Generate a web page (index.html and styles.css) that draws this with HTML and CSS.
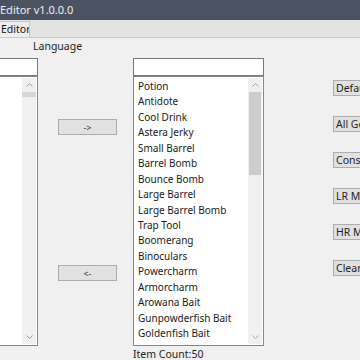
FILE: index.html
```html
<!DOCTYPE html>
<html>
<head>
<meta charset="utf-8">
<link rel="stylesheet" href="styles.css">
</head>
<body>
<div class="window">
  <div class="titlebar">Editor v1.0.0.0</div>
  <div class="tabstrip">
    <div class="tab">Editor</div>
  </div>
  <div class="panel">
    <div class="lang">Language</div>
    <div class="main">
      <div class="col col-left">
        <div class="textbox"></div>
        <div class="listbox">
          <div class="scrollbar">
            <div class="arrow up"><svg width="7" height="4" viewBox="0 0 7 4"><path d="M0.5 3.5 L3.5 0.5 L6.5 3.5" fill="none" stroke="#a0a0a0" stroke-width="1"/></svg></div>
            <div class="thumb thumb-left"></div>
            <div class="track"></div>
            <div class="arrow down"><svg width="7" height="4" viewBox="0 0 7 4"><path d="M0.5 0.5 L3.5 3.5 L6.5 0.5" fill="none" stroke="#a0a0a0" stroke-width="1"/></svg></div>
          </div>
        </div>
      </div>
      <div class="col col-mid">
        <button class="btn btn-add">-&gt;</button>
        <button class="btn btn-remove">&lt;-</button>
      </div>
      <div class="col col-list">
        <div class="textbox"></div>
        <div class="listbox">
          <ul class="items">
            <li>Potion</li>
            <li>Antidote</li>
            <li>Cool Drink</li>
            <li>Astera Jerky</li>
            <li>Small Barrel</li>
            <li>Barrel Bomb</li>
            <li>Bounce Bomb</li>
            <li>Large Barrel</li>
            <li>Large Barrel Bomb</li>
            <li>Trap Tool</li>
            <li>Boomerang</li>
            <li>Binoculars</li>
            <li>Powercharm</li>
            <li>Armorcharm</li>
            <li>Arowana Bait</li>
            <li>Gunpowderfish Bait</li>
            <li>Goldenfish Bait</li>
          </ul>
          <div class="scrollbar">
            <div class="arrow up"><svg width="7" height="4" viewBox="0 0 7 4"><path d="M0.5 3.5 L3.5 0.5 L6.5 3.5" fill="none" stroke="#a0a0a0" stroke-width="1"/></svg></div>
            <div class="thumb thumb-right"></div>
            <div class="track"></div>
            <div class="arrow down"><svg width="7" height="4" viewBox="0 0 7 4"><path d="M0.5 0.5 L3.5 3.5 L6.5 0.5" fill="none" stroke="#a0a0a0" stroke-width="1"/></svg></div>
          </div>
        </div>
        <div class="count">Item Count:50</div>
      </div>
      <div class="col col-right">
        <button class="sbtn">Default</button>
        <button class="sbtn">All Gear</button>
        <button class="sbtn">Consumables</button>
        <button class="sbtn">LR Materials</button>
        <button class="sbtn">HR Materials</button>
        <button class="sbtn">Clear</button>
      </div>
    </div>
  </div>
</div>
</body>
</html>
```
FILE: styles.css
```css
* { box-sizing: border-box; }
html, body {
  margin: 0;
  padding: 0;
  width: 360px;
  height: 360px;
  overflow: hidden;
  background: #f0f0f0;
  font-family: "Noto Sans", "Open Sans", sans-serif;
  font-size: 10px;
  color: #1e1e1e;
}
.window {
  width: 360px;
  height: 360px;
  display: flex;
  flex-direction: column;
  overflow: hidden;
}
.titlebar {
  height: 20px;
  background: #4b5362;
  color: #eceef0;
  font-size: 11px;
  line-height: 20px;
  padding-left: 0;
  white-space: nowrap;
}
.tabstrip {
  height: 18px;
  background: #e3e3e3;
  border-bottom: 1px solid #c9c9c9;
  display: flex;
  align-items: flex-end;
  padding-top: 2px;
}
.tab {
  height: 16px;
  width: 30px;
  background: #efefef;
  border: 1px solid #c6c6c6;
  border-left: none;
  border-bottom: none;
  line-height: 15px;
  padding-left: 1px;
  font-size: 10.5px;
  color: #111;
  white-space: nowrap;
  overflow: hidden;
}
.panel {
  flex: 1;
  background: #f0f0f0;
  position: relative;
}
.lang {
  margin-left: 33px;
  height: 20px;
  line-height: 15px;
  padding-top: 1px;
  font-size: 10.5px;
  color: #1e1e1e;
}
.main {
  display: flex;
  align-items: flex-start;
}
.col { display: flex; flex-direction: column; flex: none; }
.col-left { width: 38px; }
.col-mid { width: 59px; margin-left: 20px; }
.col-list { width: 131px; margin-left: 16px; }
.col-right { margin-left: 69px; width: 60px; padding-top: 22px; gap: 20px; }

.textbox {
  height: 18px;
  background: #fff;
  border: 1px solid #7a7a7a;
}
.col-left .textbox { border-left: none; }
.listbox {
  height: 270px;
  background: #fff;
  border: 1px solid #828790;
  position: relative;
  display: flex;
}
.col-left .listbox { border-left: none; justify-content: flex-end; }
.items {
  list-style: none;
  margin: 0;
  padding: 2px 0 0 4px;
  flex: 1;
  overflow: hidden;
}
.items li {
  height: 15.45px;
  line-height: 15.45px;
  white-space: nowrap;
  color: #1a1a1a;
}
.scrollbar {
  width: 14px;
  margin: 1px 1px 1px 0;
  background: #f0f0f0;
  display: flex;
  flex-direction: column;
  flex: none;
}
.arrow {
  height: 14px;
  display: flex;
  align-items: center;
  justify-content: center;
  flex: none;
}
.track { flex: 1; }
.thumb { flex: none; background: #cdcdcd; }
.thumb-right { height: 83px; margin: 0 1px; }
.thumb-left { height: 5px; margin: 0 0; background: #d6d6d6; }

.btn {
  font-family: inherit;
  font-size: 9px;
  width: 59px;
  height: 16px;
  padding: 0;
  background: #e1e1e1;
  border: 1px solid #adadad;
  color: #333;
  line-height: 13px;
}
.btn-add { margin-top: 61px; }
.btn-remove { margin-top: 130px; }
.count {
  margin-top: 1px;
  line-height: 14px;
  font-size: 10.5px;
  color: #1e1e1e;
}
.sbtn {
  font-family: inherit;
  font-size: 10.5px;
  height: 16px;
  width: 70px;
  padding: 0 0 0 2px;
  text-align: left;
  white-space: nowrap;
  background: #e1e1e1;
  border: 1px solid #adadad;
  color: #1e1e1e;
  line-height: 13px;
  flex: none;
}
```
